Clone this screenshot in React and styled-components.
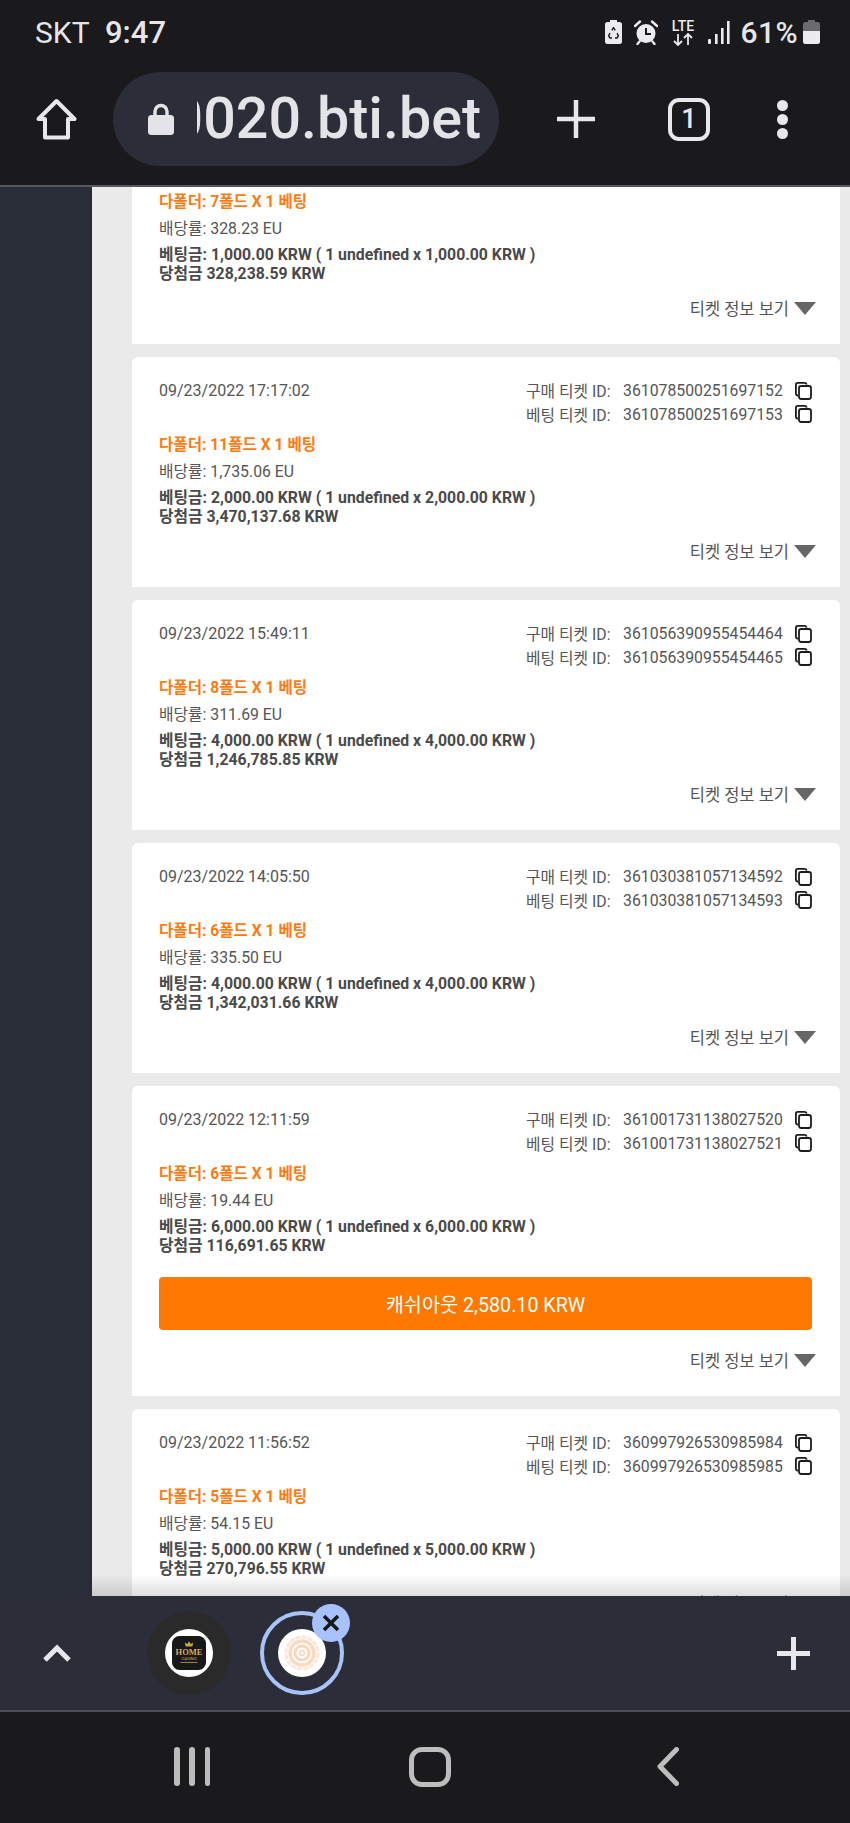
import styled, { createGlobalStyle } from "styled-components"

const GlobalStyle = createGlobalStyle`
  html, body {
    margin: 0;
    padding: 0;
    background: #1a1a1c;
  }
  body {
    font-family: Roboto, "Noto Sans CJK KR", sans-serif;
  }
`

const Screen = styled.div`
  width: 850px;
  height: 1823px;
  display: flex;
  flex-direction: column;
  overflow: hidden;
  background: #1a1a1c;
`

const Header = styled.header`
  height: 187px;
  flex-shrink: 0;
  box-sizing: border-box;
  border-bottom: 2px solid #555861;
  background: #1a1a1c;
`

const StatusBar = styled.div`
  height: 72px;
  box-sizing: border-box;
  padding: 0 30px 8px 35px;
  display: flex;
  align-items: center;
  color: #e6e6e8;
  font-size: 30px;
`

const Carrier = styled.span`
  width: 70px;
`

const Clock = styled.span`
  font-size: 31px;
  font-weight: 500;
`

const StatusIcons = styled.div`
  margin-left: auto;
  display: flex;
  align-items: center;
  gap: 12px;
`

const Battery = styled.span`
  font-size: 30px;
  font-weight: 500;
  margin-left: -1px;
  margin-right: -7px;
  letter-spacing: 0.4px;
`

const Toolbar = styled.div`
  height: 94px;
  padding-left: 36px;
  display: flex;
  align-items: center;
  color: #e8e8ec;
`

const UrlPill = styled.div`
  width: 386px;
  height: 94px;
  margin-left: 36px;
  margin-right: 58px;
  box-sizing: border-box;
  padding-left: 35px;
  display: flex;
  align-items: center;
  gap: 23px;
  border-radius: 47px;
  background: #2b2e39;
`

const UrlText = styled.div`
  width: 288px;
  box-sizing: border-box;
  padding-right: 4px;
  display: flex;
  justify-content: flex-end;
  overflow: hidden;
  font-size: 57.4px;
  font-weight: 500;
  line-height: 70px;
  color: #e4e4e8;
  white-space: nowrap;
`

const TabCount = styled.div`
  width: 42px;
  height: 43px;
  margin-left: 73px;
  box-sizing: border-box;
  border: 4px solid #e8e8ec;
  border-radius: 11px;
  display: flex;
  align-items: center;
  justify-content: center;
  font-size: 27px;
  font-weight: 500;
`

const MenuDots = styled.div`
  margin-left: 67px;
  display: flex;
  flex-direction: column;
  gap: 3px;

  span {
    width: 11px;
    height: 11px;
    border-radius: 50%;
    background: #e8e8ec;
  }
`

const Main = styled.main`
  position: relative;
  height: 1409px;
  flex-shrink: 0;
  display: flex;
  overflow: hidden;

  &::after {
    content: "";
    position: absolute;
    left: 92px;
    right: 0;
    bottom: 0;
    height: 22px;
    background: linear-gradient(rgba(0, 0, 0, 0), rgba(0, 0, 0, 0.13));
  }
`

const Sidebar = styled.aside`
  width: 92px;
  flex-shrink: 0;
  background: #292d38;
`

const TicketList = styled.div`
  flex: 1;
  min-width: 0;
  box-sizing: border-box;
  padding: 0 10px 0 40px;
  display: flex;
  flex-direction: column;
  gap: 13px;
  background: #eaeaea;
`

const Card = styled.section`
  flex-shrink: 0;
  box-sizing: border-box;
  padding: ${(p) => (p.$scrolled ? "5px" : "22px")} 28px 26px 27px;
  border-radius: ${(p) => (p.$scrolled ? "0" : "6px 6px 0 0")};
  background: #fff;
`

const CardTop = styled.div`
  display: flex;
  justify-content: space-between;
  margin-bottom: 9px;
`

const DateText = styled.div`
  margin-top: 1px;
  font-size: 16px;
  line-height: 22px;
  color: #555;
`

const TicketIds = styled.div`
  display: flex;
  flex-direction: column;
`

const IdRow = styled.div`
  height: 23.5px;
  display: flex;
  align-items: center;
  font-size: 15.8px;
  color: #555;
`

const IdLabel = styled.span`
  width: 97px;
  white-space: nowrap;
`

const IdValue = styled.span`
  width: 172px;
`

const BetType = styled.div`
  font-size: 15.6px;
  font-weight: 700;
  line-height: 20px;
  color: #ff7a10;
`

const Odds = styled.div`
  margin: 7px 0;
  font-size: 15.8px;
  line-height: 20px;
  color: #555;
`

const Amount = styled.div`
  font-size: 15.8px;
  font-weight: 700;
  line-height: 18.5px;
  color: #4a4a4a;
`

const CashoutButton = styled.div`
  height: 53px;
  margin-top: 22px;
  display: flex;
  align-items: center;
  justify-content: center;
  border-radius: 4px;
  background: #ff7800;
  font-size: 19.7px;
  color: #fff;
`

const InfoToggle = styled.div`
  height: 20px;
  margin-top: ${(p) => (p.$afterButton ? "20px" : "15px")};
  margin-right: -4px;
  display: flex;
  align-items: center;
  justify-content: flex-end;
  gap: 5px;
  font-size: 16.5px;
  color: #555;
`

const Caret = styled.span`
  width: 0;
  height: 0;
  border-left: 11px solid transparent;
  border-right: 11px solid transparent;
  border-top: 13px solid #666;
`

const TabBar = styled.div`
  height: 116px;
  flex-shrink: 0;
  box-sizing: border-box;
  padding: 0 40px 0 43px;
  display: flex;
  align-items: center;
  border-bottom: 2px solid #4a4c55;
  background: #2b2e39;
  color: #e8e8ec;
`

const TabBubble = styled.div`
  position: relative;
  width: 84px;
  height: 84px;
  margin-left: ${(p) => p.$offset}px;
  box-sizing: border-box;
  display: flex;
  align-items: center;
  justify-content: center;
  border-radius: 50%;
  background: ${(p) => (p.$active ? "transparent" : "#2a2a2b")};
  border: ${(p) => (p.$active ? "4px solid #a9c2f8" : "none")};
`

const Favicon = styled.div`
  width: 48px;
  height: 48px;
  display: flex;
  align-items: center;
  justify-content: center;
  border-radius: 50%;
  background: #fff;
`

const CloseBadge = styled.div`
  position: absolute;
  top: -11px;
  right: -10px;
  width: 38px;
  height: 38px;
  display: flex;
  align-items: center;
  justify-content: center;
  border-radius: 50%;
  background: #a8c2ff;
`

const AddTab = styled.div`
  margin-left: auto;
  display: flex;
`

const NavBar = styled.nav`
  height: 111px;
  flex-shrink: 0;
  box-sizing: border-box;
  padding: 35px 0 0 174px;
  display: flex;
  align-items: flex-start;
  background: #1a1a1c;
`

const RecentBars = styled.div`
  width: 36px;
  height: 39px;
  display: flex;
  justify-content: space-between;

  span {
    width: 5.5px;
    border-radius: 3px;
    background: #bdbdbd;
  }
`

const HomeKey = styled.div`
  width: 42px;
  height: 40px;
  margin-left: 199px;
  margin-right: 206px;
  box-sizing: border-box;
  border: 5px solid #bdbdbd;
  border-radius: 13px;
`

const tickets = [
  { legs: 7, odds: "328.23", stake: "1,000.00", win: "328,238.59" },
  {
    date: "09/23/2022 17:17:02",
    buyId: "361078500251697152",
    betId: "361078500251697153",
    legs: 11,
    odds: "1,735.06",
    stake: "2,000.00",
    win: "3,470,137.68",
  },
  {
    date: "09/23/2022 15:49:11",
    buyId: "361056390955454464",
    betId: "361056390955454465",
    legs: 8,
    odds: "311.69",
    stake: "4,000.00",
    win: "1,246,785.85",
  },
  {
    date: "09/23/2022 14:05:50",
    buyId: "361030381057134592",
    betId: "361030381057134593",
    legs: 6,
    odds: "335.50",
    stake: "4,000.00",
    win: "1,342,031.66",
  },
  {
    date: "09/23/2022 12:11:59",
    buyId: "361001731138027520",
    betId: "361001731138027521",
    legs: 6,
    odds: "19.44",
    stake: "6,000.00",
    win: "116,691.65",
    cashout: "2,580.10",
  },
  {
    date: "09/23/2022 11:56:52",
    buyId: "360997926530985984",
    betId: "360997926530985985",
    legs: 5,
    odds: "54.15",
    stake: "5,000.00",
    win: "270,796.55",
  },
]

const CopyIcon = () => (
  <svg width="17" height="18" viewBox="0 0 17 18" fill="none" stroke="#1c1c1c" strokeWidth="1.8">
    <path d="M3 13.5H2.6A1.8 1.8 0 0 1 .9 11.7V2.8A1.9 1.9 0 0 1 2.8.9H9.8A1.8 1.8 0 0 1 11.6 2.6" />
    <rect x="4" y="4" width="12" height="13" rx="2.2" />
  </svg>
)

const HomeIcon = () => (
  <svg width="41" height="42" viewBox="0 0 41 42" fill="none" stroke="#e8e8ec" strokeWidth="4" strokeLinejoin="round">
    <path d="M20.5 3 L38.5 21 H32 V39.5 H9 V21 H2.5 Z" />
  </svg>
)

const LockIcon = () => (
  <svg width="26" height="32" viewBox="0 0 26 32">
    <path d="M7 13V8.5a6 6 0 0 1 12 0V13" fill="none" stroke="#e4e4e8" strokeWidth="3.4" />
    <rect x="0" y="12" width="26" height="20" rx="3.5" fill="#e4e4e8" />
  </svg>
)

const PlusIcon = ({ size, weight }) => (
  <svg width={size} height={size} viewBox={`0 0 ${size} ${size}`} stroke="#e8e8ec" strokeWidth={weight}>
    <path d={`M${size / 2} 0V${size}M0 ${size / 2}H${size}`} />
  </svg>
)

// battery outline with the three-arrow recycle mark knocked out of it
const BatterySaverIcon = () => (
  <svg width="17" height="24" viewBox="0 0 17 24">
    <path d="M5 0H12V2H14.5A2.5 2.5 0 0 1 17 4.5V21.5A2.5 2.5 0 0 1 14.5 24H2.5A2.5 2.5 0 0 1 0 21.5V4.5A2.5 2.5 0 0 1 2.5 2H5Z" fill="#ececee" />
    <path d="M6.8 10.4L8.5 7.6L10.2 10.4M12 13.2L13.4 15.8L12 18H10M7 18H5L3.6 15.8L5 13.2" fill="none" stroke="#1a1a1c" strokeWidth="1.4" strokeLinejoin="round" />
  </svg>
)

const AlarmIcon = () => (
  <svg width="24" height="25" viewBox="0 0 24 25" fill="none">
    <circle cx="12" cy="13.5" r="9.5" fill="#ececee" />
    <path d="M12 8V14H17" stroke="#1a1a1c" strokeWidth="2" />
    <path d="M1 6L6 1.5M23 6L18 1.5M5.5 21.5L3.5 24M18.5 21.5L20.5 24" stroke="#ececee" strokeWidth="2.4" strokeLinecap="round" />
  </svg>
)

const LteIcon = () => (
  <svg width="26" height="27" viewBox="0 0 26 27">
    <text x="13" y="12" textAnchor="middle" fontFamily="Roboto, sans-serif" fontSize="14" fontWeight="500" fill="#ececee">LTE</text>
    <path d="M8 15V26M4 22L8 26L12 22M18 26V15M14 19L18 15L22 19" fill="none" stroke="#ececee" strokeWidth="1.8" />
  </svg>
)

const SignalIcon = () => (
  <svg width="22" height="23" viewBox="0 0 22 23" fill="#ececee">
    <rect x="0" y="18" width="3" height="5" rx="1" />
    <rect x="7" y="13" width="2.6" height="10" />
    <rect x="13" y="7" width="2.6" height="16" />
    <rect x="19" y="0" width="2.6" height="23" />
  </svg>
)

const BatteryIcon = () => (
  <svg width="17" height="24" viewBox="0 0 17 24">
    <path d="M5 0H12V2H14.5A2.5 2.5 0 0 1 17 4.5V11H0V4.5A2.5 2.5 0 0 1 2.5 2H5Z" fill="#6b6b6e" />
    <path d="M0 11H17V21.5A2.5 2.5 0 0 1 14.5 24H2.5A2.5 2.5 0 0 1 0 21.5Z" fill="#ececee" />
  </svg>
)

const CasinoLogo = () => (
  <svg width="34" height="34" viewBox="0 0 36 36">
    <rect width="36" height="36" rx="8" fill="#17181a" />
    <path d="M14.5 11L13.5 7L16.2 8.6L18 5.5L19.8 8.6L22.5 7L21.5 11Z" fill="#c9a24e" />
    <text x="18" y="20" textAnchor="middle" fontFamily="Liberation Serif, serif" fontSize="9" fontWeight="700" fill="#d4ae5c">HOME</text>
    <text x="18" y="25.5" textAnchor="middle" fontFamily="Roboto, sans-serif" fontSize="4.5" fill="#d4ae5c">CASINO</text>
    <rect x="9" y="27.5" width="18" height="1" fill="#a98a45" />
  </svg>
)

const RingsLogo = () => (
  <svg width="36" height="36" viewBox="0 0 36 36" fill="none" stroke="#fad6ba">
    <circle cx="18" cy="18" r="2.5" strokeWidth="1.4" />
    <circle cx="18" cy="18" r="7" strokeWidth="3" />
    <circle cx="18" cy="18" r="12" strokeWidth="3.4" opacity="0.9" />
    <circle cx="18" cy="18" r="16" strokeWidth="3" strokeDasharray="5 1.2" opacity="0.6" />
  </svg>
)

const TicketCard = ({ ticket }) => (
  <Card $scrolled={!ticket.date}>
    {ticket.date && (
      <CardTop>
        <DateText>{ticket.date}</DateText>
        <TicketIds>
          <IdRow>
            <IdLabel>구매 티켓 ID:</IdLabel>
            <IdValue>{ticket.buyId}</IdValue>
            <CopyIcon />
          </IdRow>
          <IdRow>
            <IdLabel>베팅 티켓 ID:</IdLabel>
            <IdValue>{ticket.betId}</IdValue>
            <CopyIcon />
          </IdRow>
        </TicketIds>
      </CardTop>
    )}
    <BetType>다폴더: {ticket.legs}폴드 X 1 베팅</BetType>
    <Odds>배당률: {ticket.odds} EU</Odds>
    <Amount>
      베팅금: {ticket.stake} KRW ( 1 undefined x {ticket.stake} KRW )
    </Amount>
    <Amount>당첨금 {ticket.win} KRW</Amount>
    {ticket.cashout && <CashoutButton>캐쉬아웃 {ticket.cashout} KRW</CashoutButton>}
    <InfoToggle $afterButton={Boolean(ticket.cashout)}>
      티켓 정보 보기
      <Caret />
    </InfoToggle>
  </Card>
)

export default function App() {
  return (
    <Screen>
      <GlobalStyle />
      <Header>
        <StatusBar>
          <Carrier>SKT</Carrier>
          <Clock>9:47</Clock>
          <StatusIcons>
            <BatterySaverIcon />
            <AlarmIcon />
            <LteIcon />
            <SignalIcon />
            <Battery>61%</Battery>
            <BatteryIcon />
          </StatusIcons>
        </StatusBar>
        <Toolbar>
          <HomeIcon />
          <UrlPill>
            <LockIcon />
            <UrlText>0020.bti.bet</UrlText>
          </UrlPill>
          <PlusIcon size={38} weight={4.5} />
          <TabCount>1</TabCount>
          <MenuDots>
            <span />
            <span />
            <span />
          </MenuDots>
        </Toolbar>
      </Header>

      <Main>
        <Sidebar />
        <TicketList>
          {tickets.map((ticket) => (
            <TicketCard key={ticket.win} ticket={ticket} />
          ))}
        </TicketList>
      </Main>

      <TabBar>
        <svg width="28" height="18" viewBox="0 0 28 18" fill="none" stroke="#e8e8ec" strokeWidth="5">
          <path d="M2 16L14 4L26 16" />
        </svg>
        <TabBubble $offset={76}>
          <Favicon>
            <CasinoLogo />
          </Favicon>
        </TabBubble>
        <TabBubble $offset={29} $active>
          <Favicon>
            <RingsLogo />
          </Favicon>
          <CloseBadge>
            <svg width="18" height="18" viewBox="0 0 18 18" stroke="#17181a" strokeWidth="3.6">
              <path d="M2 2L16 16M16 2L2 16" />
            </svg>
          </CloseBadge>
        </TabBubble>
        <AddTab>
          <PlusIcon size={33} weight={5} />
        </AddTab>
      </TabBar>

      <NavBar>
        <RecentBars>
          <span />
          <span />
          <span />
        </RecentBars>
        <HomeKey />
        <svg width="22" height="39" viewBox="0 0 22 39" fill="none" stroke="#bdbdbd" strokeWidth="5" strokeLinecap="round" strokeLinejoin="round">
          <path d="M19.5 2.5L3 19.5L19.5 36.5" />
        </svg>
      </NavBar>
    </Screen>
  )
}
